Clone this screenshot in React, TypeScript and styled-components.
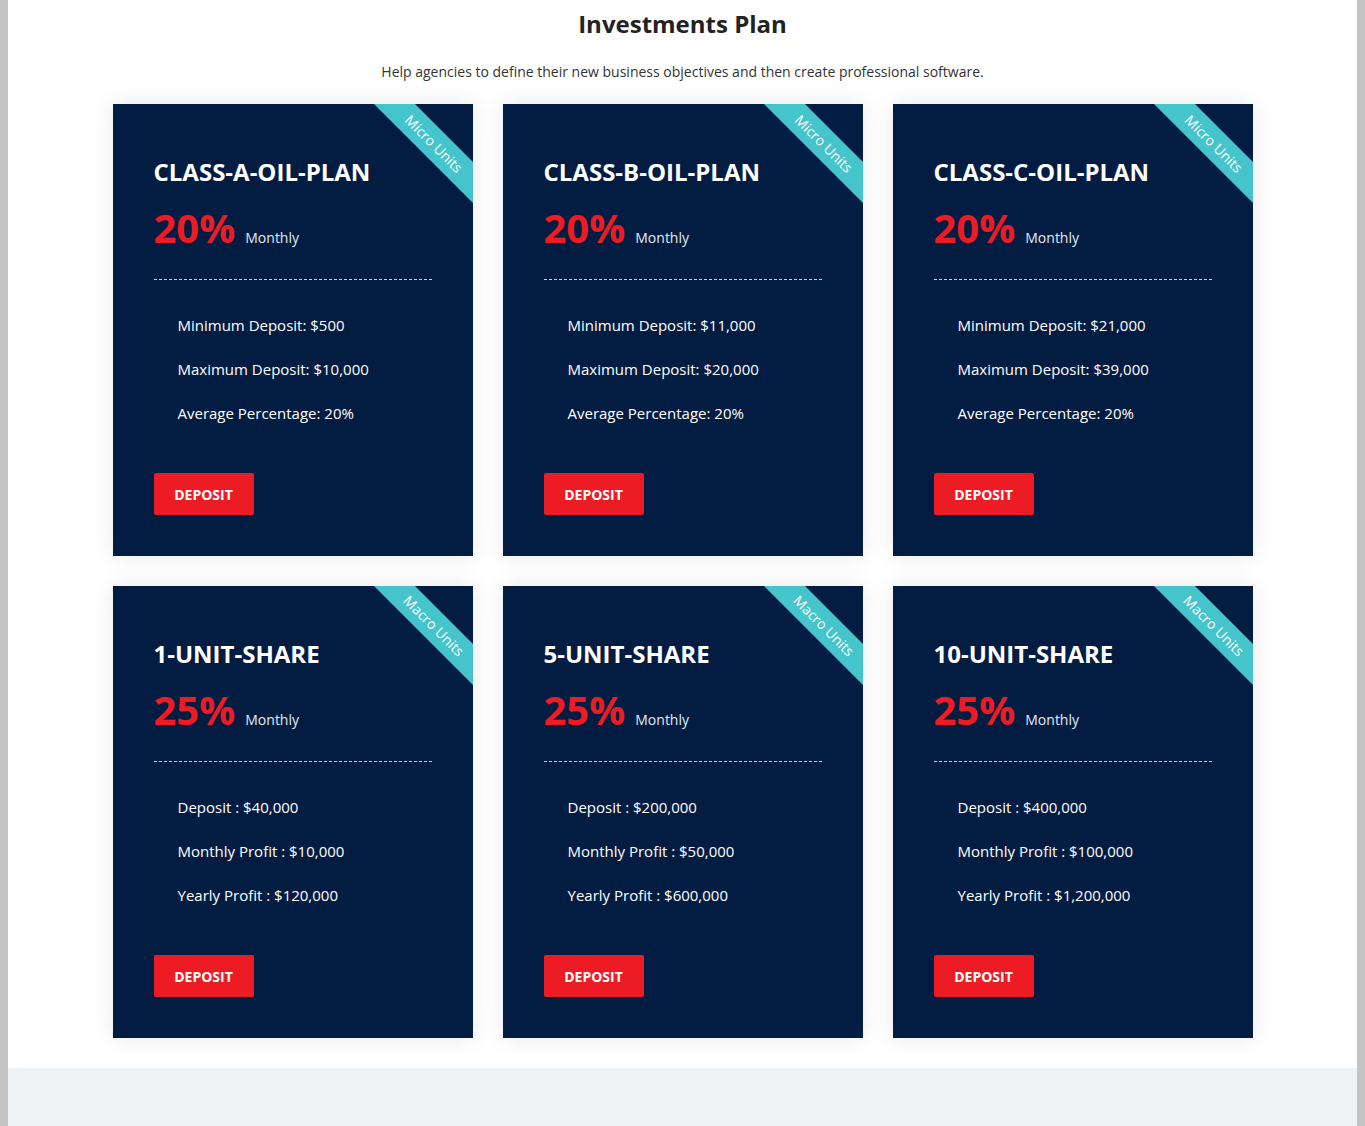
import React from "react";
import styled, { createGlobalStyle } from "styled-components";

const Global = createGlobalStyle`
  html { background: #c4c4c4; }
  body {
    margin: 0 8px;
    background: #ffffff;
    font-family: "Open Sans", "Liberation Sans", sans-serif;
  }
`;

const Section = styled.section`
  background: #ffffff;
  padding: 7px 0 30px;
`;

const Heading = styled.h2`
  margin: 0;
  text-align: center;
  font-size: 24px;
  font-weight: 700;
  color: #222222;
  line-height: 33px;
`;

const Sub = styled.p`
  margin: 22px 0 0;
  text-align: center;
  font-size: 14px;
  color: #333333;
  line-height: 20px;
`;

const Grid = styled.div`
  width: 1140px;
  margin: 22px auto 0;
  display: grid;
  grid-template-columns: repeat(3, 360px);
  column-gap: 30px;
  row-gap: 30px;
`;

const Card = styled.div`
  position: relative;
  overflow: hidden;
  background: #031d42;
  height: 452px;
  box-sizing: border-box;
  padding: 51px 41px 41px;
  box-shadow: 0 0 22px rgba(0, 0, 0, 0.09);
  display: flex;
  flex-direction: column;
`;

const Ribbon = styled.div`
  position: absolute;
  top: 25px;
  right: -41px;
  width: 160px;
  height: 29px;
  background: #45c4cc;
  color: #ffffff;
  font-size: 14px;
  line-height: 29px;
  text-align: center;
  transform: rotate(45deg);
`;

const Title = styled.h3`
  margin: 0;
  font-size: 24px;
  font-weight: 700;
  color: #ffffff;
  line-height: 33px;
`;

const PriceRow = styled.div`
  margin-top: 20px;
  display: flex;
  align-items: baseline;
  gap: 10px;
`;

const Percent = styled.span`
  font-size: 40px;
  font-weight: 700;
  color: #ed1c24;
  line-height: 40px;
`;

const Period = styled.span`
  font-size: 14px;
  color: #e6e9ef;
`;

const Divider = styled.hr`
  margin: 31px 0 0;
  border: 0;
  border-top: 1px dashed #c9ced6;
  height: 0;
`;

const List = styled.ul`
  list-style: none;
  margin: 23px 0 0;
  padding: 0 0 0 24px;
`;

const Item = styled.li`
  font-size: 15px;
  line-height: 44px;
  color: #ffffff;
`;

const Button = styled.button`
  margin-top: auto;
  width: 100px;
  height: 42px;
  border: 0;
  border-radius: 2px;
  background: #ed1c24;
  color: #ffffff;
  font-family: "Open Sans", "Liberation Sans", sans-serif;
  font-size: 14px;
  font-weight: 700;
  cursor: pointer;
`;

const Footer = styled.div`
  background: #eff2f5;
  height: 58px;
`;

type Plan = { title: string; pct: string; ribbon: string; items: string[] };

const plans: Plan[] = [
  { title: "CLASS-A-OIL-PLAN", pct: "20%", ribbon: "Micro Units", items: ["Minimum Deposit: $500", "Maximum Deposit: $10,000", "Average Percentage: 20%"] },
  { title: "CLASS-B-OIL-PLAN", pct: "20%", ribbon: "Micro Units", items: ["Minimum Deposit: $11,000", "Maximum Deposit: $20,000", "Average Percentage: 20%"] },
  { title: "CLASS-C-OIL-PLAN", pct: "20%", ribbon: "Micro Units", items: ["Minimum Deposit: $21,000", "Maximum Deposit: $39,000", "Average Percentage: 20%"] },
  { title: "1-UNIT-SHARE", pct: "25%", ribbon: "Macro Units", items: ["Deposit : $40,000", "Monthly Profit : $10,000", "Yearly Profit : $120,000"] },
  { title: "5-UNIT-SHARE", pct: "25%", ribbon: "Macro Units", items: ["Deposit : $200,000", "Monthly Profit : $50,000", "Yearly Profit : $600,000"] },
  { title: "10-UNIT-SHARE", pct: "25%", ribbon: "Macro Units", items: ["Deposit : $400,000", "Monthly Profit : $100,000", "Yearly Profit : $1,200,000"] },
];

export default function App() {
  return (
    <>
      <Global />
      <Section>
        <Heading>Investments Plan</Heading>
        <Sub>Help agencies to define their new business objectives and then create professional software.</Sub>
        <Grid>
          {plans.map((p) => (
            <Card key={p.title}>
              <Ribbon>{p.ribbon}</Ribbon>
              <Title>{p.title}</Title>
              <PriceRow>
                <Percent>{p.pct}</Percent>
                <Period>Monthly</Period>
              </PriceRow>
              <Divider />
              <List>
                {p.items.map((it) => (
                  <Item key={it}>{it}</Item>
                ))}
              </List>
              <Button>DEPOSIT</Button>
            </Card>
          ))}
        </Grid>
      </Section>
      <Footer />
    </>
  );
}
